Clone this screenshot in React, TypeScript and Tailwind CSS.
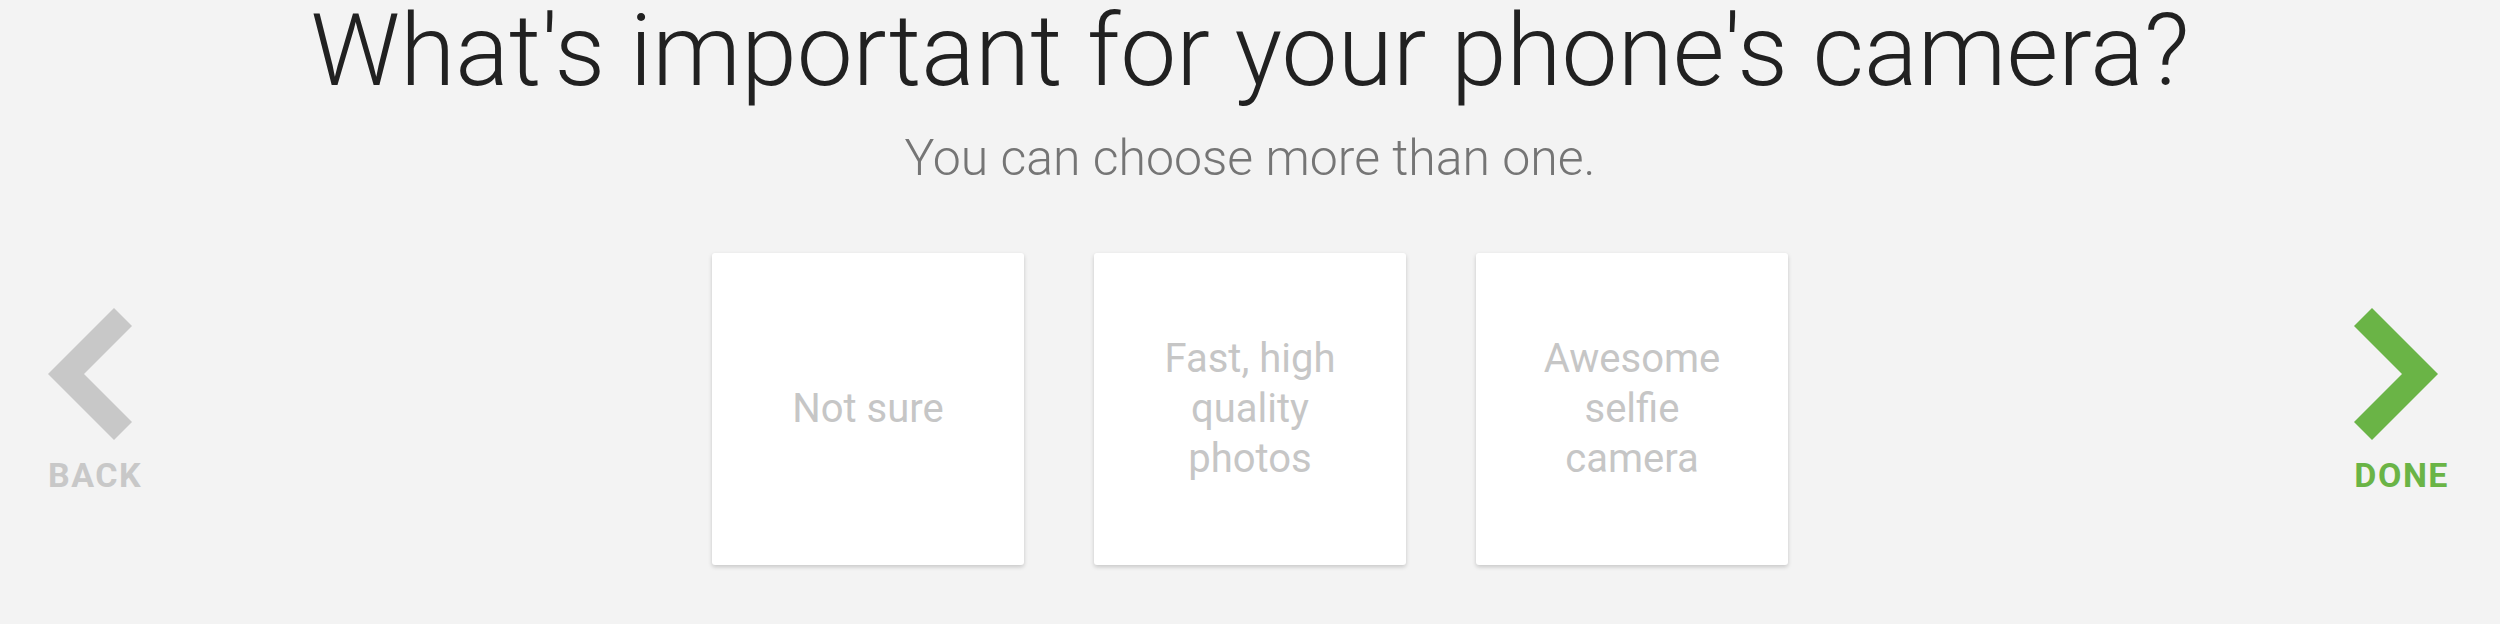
import React from "react";

const options = ["Not sure", "Fast, high quality photos", "Awesome selfie camera"];

function Chevron({ dir, color }: { dir: "left" | "right"; color: string }) {
  const points =
    dir === "left"
      ? "66,0 0,66 66,132 84,114 36,66 84,18"
      : "18,0 84,66 18,132 0,114 48,66 0,18";
  return (
    <svg width="84" height="134" viewBox="0 0 84 132" aria-hidden>
      <polygon points={points} fill={color} />
    </svg>
  );
}

function NavButton({ dir, label, color, textClass }: { dir: "left" | "right"; label: string; color: string; textClass: string }) {
  return (
    <button className="mt-[54px] flex flex-col items-start gap-[17px]">
      <Chevron dir={dir} color={color} />
      <span className={`text-[34px] font-bold leading-none tracking-[1.5px] ${textClass}`}>{label}</span>
    </button>
  );
}

export default function App() {
  return (
    <div className="h-[624px] w-full overflow-hidden bg-[#f3f3f3] font-['Roboto',sans-serif]">
      <h1 className="pt-px text-center text-[100px] font-light leading-none tracking-[0.1px] text-[#212121]">
        What's important for your phone's camera?
      </h1>
      <p className="mt-[32px] text-center text-[50px] font-light leading-none text-[#757575]">
        You can choose more than one.
      </p>

      <div className="mt-[70px] grid grid-cols-[1fr_auto_1fr] items-start">
        <div className="justify-self-start pl-[48px]">
          <NavButton dir="left" label="BACK" color="#c8c8c8" textClass="text-[#c8c8c8]" />
        </div>

        <div className="flex gap-[70px]">
          {options.map((opt) => (
            <div
              key={opt}
              className="flex h-[312px] w-[312px] items-center justify-center rounded-[3px] bg-white px-12 text-center shadow-[0_2px_4px_rgba(0,0,0,0.18)]"
            >
              <span className="text-[40px] leading-[50px] text-[#c6c6c6]">{opt}</span>
            </div>
          ))}
        </div>

        <div className="justify-self-end pr-[51px]">
          <NavButton dir="right" label="DONE" color="#6ab446" textClass="text-[#6ab446]" />
        </div>
      </div>
    </div>
  );
}
